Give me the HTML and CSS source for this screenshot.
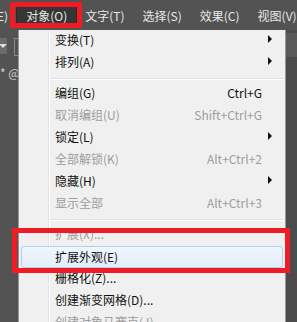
FILE: index.html
```html
<!DOCTYPE html>
<html lang="zh-CN">
<head>
    <meta charset="UTF-8">
    <title>对象菜单</title>
    <link rel="stylesheet" href="styles.css">
</head>
<body>
    <div class="app">
        <div class="menubar">
            <span class="bar-item">编辑(E)</span>
            <span class="bar-item active">对象(O)</span>
            <span class="bar-item">文字(T)</span>
            <span class="bar-item">选择(S)</span>
            <span class="bar-item">效果(C)</span>
            <span class="bar-item">视图(V)</span>
        </div>

        <div class="workspace">
            <div class="side-left">
                <div class="tool-row">
                    <span class="drop-box"><span class="drop-arrow"></span></span>
                    <span class="field-edge"></span>
                </div>
                <div class="tool-text">* @</div>
            </div>

            <div class="menu">
                <div class="item"><span class="label">变换(T)</span><span class="arrow"></span></div>
                <div class="item"><span class="label">排列(A)</span><span class="arrow"></span></div>
                <div class="sep"></div>
                <div class="item"><span class="label">编组(G)</span><span class="key">Ctrl+G</span></div>
                <div class="item disabled"><span class="label">取消编组(U)</span><span class="key">Shift+Ctrl+G</span></div>
                <div class="item"><span class="label">锁定(L)</span><span class="arrow"></span></div>
                <div class="item disabled"><span class="label">全部解锁(K)</span><span class="key">Alt+Ctrl+2</span></div>
                <div class="item"><span class="label">隐藏(H)</span><span class="arrow"></span></div>
                <div class="item disabled"><span class="label">显示全部</span><span class="key">Alt+Ctrl+3</span></div>
                <div class="sep"></div>
                <div class="item disabled"><span class="label">扩展(X)...</span></div>
                <div class="item hover"><span class="label">扩展外观(E)</span></div>
                <div class="item"><span class="label">栅格化(Z)...</span></div>
                <div class="item"><span class="label">创建渐变网格(D)...</span></div>
                <div class="item disabled"><span class="label">创建对象马赛克(J)...</span></div>
            </div>

            <div class="side-right">
                <div class="right-box"></div>
            </div>
        </div>

        <!-- red annotation frames drawn over the screenshot -->
        <div class="mark mark-top"></div>
        <div class="mark mark-item"></div>
    </div>
</body>
</html>
```

FILE: styles.css
```css
/* Illustrator style "Object" menu, Windows 7 look */
body {
    margin: 0;
    font-family: "Noto Sans CJK SC", "Noto Sans", sans-serif;
    font-size: 12px;
    background-color: #4f4f4f;
    overflow: hidden;
}

.app {
    position: relative;
    width: 297px;
    height: 322px;
    overflow: hidden;
}

.menubar {
    display: flex;
    height: 30px;
    align-items: center;
    margin-left: -40px;
    background-color: #535353;
    color: #e8e8e8;
    white-space: nowrap;
}

.bar-item {
    padding: 0 9px;
    line-height: 17px;
    flex-shrink: 0;
}

.bar-item.active {
    background-color: #363636;
    border: 1px solid #2c2c2c;
    border-radius: 2px;
    margin: 0 -1px;
}

.workspace {
    display: flex;
    height: 292px;
}

.side-left {
    width: 18px;
    flex-shrink: 0;
    background-color: #535353;
    padding-top: 8px;
}

.tool-row {
    display: flex;
    gap: 7px;
    height: 16px;
}

.drop-box {
    width: 8px;
    height: 16px;
    background-color: #6a6a6a;
    display: flex;
    align-items: center;
    justify-content: center;
}

.drop-arrow {
    width: 0;
    height: 0;
    border-left: 4px solid transparent;
    border-right: 4px solid transparent;
    border-top: 4px solid #e0e0e0;
    margin-left: -2px;
}

.field-edge {
    width: 3px;
    height: 16px;
    border: 1px solid #8a8a8a;
    border-right: none;
}

.tool-text {
    margin-top: 10px;
    color: #cfcfcf;
    font-size: 12px;
    white-space: nowrap;
}

.menu {
    width: 266px;
    flex-shrink: 0;
    background-color: #f0f0f0;
    border-left: 1px solid #979797;
    border-right: 1px solid #979797;
    background-image: linear-gradient(to right, transparent 29px, #e2e3e3 29px, #e2e3e3 30px, #ffffff 30px, #ffffff 31px, transparent 31px);
    color: #111;
}

.item {
    display: flex;
    align-items: center;
    box-sizing: border-box;
    height: 22px;
    padding: 0 21px 4px 34px;
    margin: 0 2px;
    white-space: nowrap;
}

.item .label {
    flex: 1;
}

.key {
    color: #111;
}

.disabled,
.disabled .key {
    color: #9d9d9d;
}

.arrow {
    width: 0;
    height: 0;
    border-top: 4px solid transparent;
    border-bottom: 4px solid transparent;
    border-left: 4px solid #111;
    margin-right: -10px;
}

.hover {
    border: 1px solid #aecff7;
    border-radius: 3px;
    background: linear-gradient(to bottom, #f1f6fd, #e3edfa);
    padding: 0 21px 2px 33px;
}

.sep {
    height: 1px;
    margin: 4px 2px 3px 31px;
    background-color: #e0e0e0;
    border-bottom: 1px solid #ffffff;
}

.side-right {
    flex: 1;
    background-color: #4b4b4b;
    padding-top: 3px;
}

.right-box {
    height: 24px;
    background-color: #5a5a5a;
}

.mark {
    position: absolute;
    border: 5px solid #ee1c24;
}

.mark-top {
    left: 10px;
    top: 2px;
    width: 62px;
    height: 16px;
}

.mark-item {
    left: 12px;
    top: 228px;
    width: 268px;
    height: 35px;
}
```
